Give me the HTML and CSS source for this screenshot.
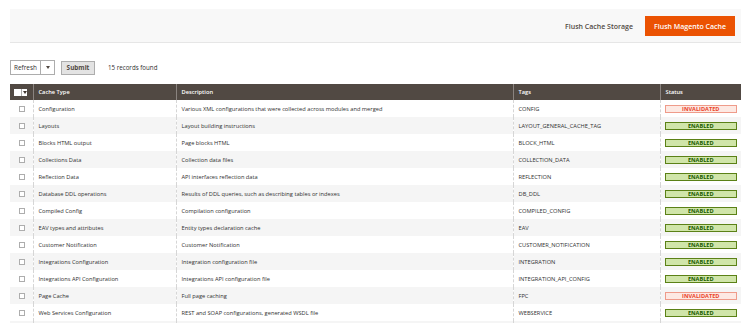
FILE: index.html
```html
<!DOCTYPE html>
<html>
<head>
<meta charset="utf-8">
<link rel="stylesheet" href="styles.css">
</head>
<body>
<div class="page">
  <div class="actions-bar">
    <button class="btn-link">Flush Cache Storage</button>
    <button class="btn-primary">Flush Magento Cache</button>
  </div>
  <div class="toolbar">
    <div class="select">
      <span class="select-label">Refresh</span>
      <span class="select-arrow"><svg width="4" height="3" viewBox="0 0 4 3"><path d="M0 0H4L2 3Z" fill="#514943"/></svg></span>
    </div>
    <button class="btn-submit">Submit</button>
    <span class="records">15 records found</span>
  </div>
  <table class="grid">
    <colgroup>
      <col class="c-check"><col class="c-type"><col class="c-desc"><col class="c-tags"><col class="c-status">
    </colgroup>
    <thead>
      <tr>
        <th class="th-check"><span class="mass"><span class="mass-box"></span><span class="mass-arrow"><svg width="4" height="3" viewBox="0 0 4 3"><path d="M0 0H4L2 3Z" fill="#41362f"/></svg></span></span></th>
        <th>Cache Type</th>
        <th>Description</th>
        <th>Tags</th>
        <th>Status</th>
      </tr>
    </thead>
    <tbody>
      <tr><td class="td-check"><span class="cb"></span></td><td>Configuration</td><td>Various XML configurations that were collected across modules and merged</td><td>CONFIG</td><td><span class="badge invalid">INVALIDATED</span></td></tr>
      <tr><td class="td-check"><span class="cb"></span></td><td>Layouts</td><td>Layout building instructions</td><td>LAYOUT_GENERAL_CACHE_TAG</td><td><span class="badge enabled">ENABLED</span></td></tr>
      <tr><td class="td-check"><span class="cb"></span></td><td>Blocks HTML output</td><td>Page blocks HTML</td><td>BLOCK_HTML</td><td><span class="badge enabled">ENABLED</span></td></tr>
      <tr><td class="td-check"><span class="cb"></span></td><td>Collections Data</td><td>Collection data files</td><td>COLLECTION_DATA</td><td><span class="badge enabled">ENABLED</span></td></tr>
      <tr><td class="td-check"><span class="cb"></span></td><td>Reflection Data</td><td>API interfaces reflection data</td><td>REFLECTION</td><td><span class="badge enabled">ENABLED</span></td></tr>
      <tr><td class="td-check"><span class="cb"></span></td><td>Database DDL operations</td><td>Results of DDL queries, such as describing tables or indexes</td><td>DB_DDL</td><td><span class="badge enabled">ENABLED</span></td></tr>
      <tr><td class="td-check"><span class="cb"></span></td><td>Compiled Config</td><td>Compilation configuration</td><td>COMPILED_CONFIG</td><td><span class="badge enabled">ENABLED</span></td></tr>
      <tr><td class="td-check"><span class="cb"></span></td><td>EAV types and attributes</td><td>Entity types declaration cache</td><td>EAV</td><td><span class="badge enabled">ENABLED</span></td></tr>
      <tr><td class="td-check"><span class="cb"></span></td><td>Customer Notification</td><td>Customer Notification</td><td>CUSTOMER_NOTIFICATION</td><td><span class="badge enabled">ENABLED</span></td></tr>
      <tr><td class="td-check"><span class="cb"></span></td><td>Integrations Configuration</td><td>Integration configuration file</td><td>INTEGRATION</td><td><span class="badge enabled">ENABLED</span></td></tr>
      <tr><td class="td-check"><span class="cb"></span></td><td>Integrations API Configuration</td><td>Integrations API configuration file</td><td>INTEGRATION_API_CONFIG</td><td><span class="badge enabled">ENABLED</span></td></tr>
      <tr><td class="td-check"><span class="cb"></span></td><td>Page Cache</td><td>Full page caching</td><td>FPC</td><td><span class="badge invalid">INVALIDATED</span></td></tr>
      <tr><td class="td-check"><span class="cb"></span></td><td>Web Services Configuration</td><td>REST and SOAP configurations, generated WSDL file</td><td>WEBSERVICE</td><td><span class="badge enabled">ENABLED</span></td></tr>
      <tr class="row-stub"><td></td><td></td><td></td><td></td><td></td></tr>
    </tbody>
  </table>
</div>
</body>
</html>
```
FILE: styles.css
```css
* { box-sizing: border-box; }
html, body { margin: 0; padding: 0; background: #fff; }
body { font-family: "Open Sans", "Liberation Sans", sans-serif; color: #303030; overflow: hidden; height: 323px; }
.page { padding: 9px 9px 0 10px; width: 750px; }

.actions-bar {
  height: 34px;
  background: #f8f8f8;
  border-bottom: 1px solid #e6e6e6;
  display: flex;
  justify-content: flex-end;
  align-items: center;
  padding-right: 6px;
  gap: 12px;
}
.btn-link {
  background: none; border: 0; padding: 0;
  font-family: inherit; font-size: 7px; font-weight: 600; color: #514943;
  margin-top: 2px;
}
.btn-primary {
  width: 90px; height: 20px;
  background: #eb5202; border: 1px solid #eb5202; color: #fff;
  font-family: inherit; font-size: 7px; font-weight: 600; padding: 0;
  margin-top: 1px;
}

.toolbar {
  display: flex; align-items: center;
  margin-top: 17px; height: 15px;
}
.select {
  display: flex; width: 45px; height: 15px;
  border: 1px solid #adadad; background: #fff;
}
.select-label { flex: 1; font-size: 6.4px; color: #303030; padding-left: 3px; line-height: 13px; }
.select-arrow { width: 14px; border-left: 1px solid #adadad; display: flex; align-items: center; justify-content: center; }
.btn-submit {
  margin-left: 6px; width: 34px; height: 14px;
  background: #e3e3e3; border: 1px solid #adadad; padding: 0;
  font-family: inherit; font-size: 6.4px; font-weight: 700; color: #514943;
}
.records { margin-left: 13px; font-size: 6.2px; color: #303030; }

.grid {
  margin-top: 9px;
  width: 731px;
  border-collapse: collapse;
  table-layout: fixed;
  font-size: 5.7px;
}
.c-check { width: 23px; }
.c-type { width: 143px; }
.c-desc { width: 337px; }
.c-tags { width: 147px; }
.c-status { width: 81px; }

.grid th {
  background: #514943; color: #fff; font-weight: 600;
  height: 16px; padding: 0 5px; text-align: left;
  border-left: 1px solid #8a837f;
  white-space: nowrap;
}
.grid th:first-child { border-left: 0; }
.grid td {
  height: 17px; padding: 0 5px; white-space: nowrap; overflow: hidden;
  border-left: 1px dashed #d6d6d6;
  color: #303030;
}
.grid td:first-child { border-left: 0; }
.grid tbody tr:nth-child(even) td { background: #f5f5f5; }
.grid td:last-child { padding: 0 4px; }

.th-check, .td-check { text-align: center; }
.grid .th-check { padding: 0 0 0 4px; }
.mass { display: flex; align-items: center; height: 7px; }
.mass-box { width: 7px; height: 7px; background: #fff; }
.mass-arrow { width: 6px; height: 7px; background: #fff; border-left: 1px solid #adadad; display: flex; align-items: center; justify-content: center; }
.grid .td-check { padding: 0 0 0 9px; }
.cb { display: block; width: 6px; height: 6px; border: 1px solid #adadad; background: #fff; }

.badge {
  display: block; height: 8px; line-height: 6px;
  text-align: center; font-size: 5.6px; font-weight: 700;
}
.badge.enabled { background: #d0e5a9; border: 1px solid #5b8116; color: #185b00; }
.badge.invalid { background: #fde9e3; border: 1px solid #ef9b8a; color: #e9442a; }
```
